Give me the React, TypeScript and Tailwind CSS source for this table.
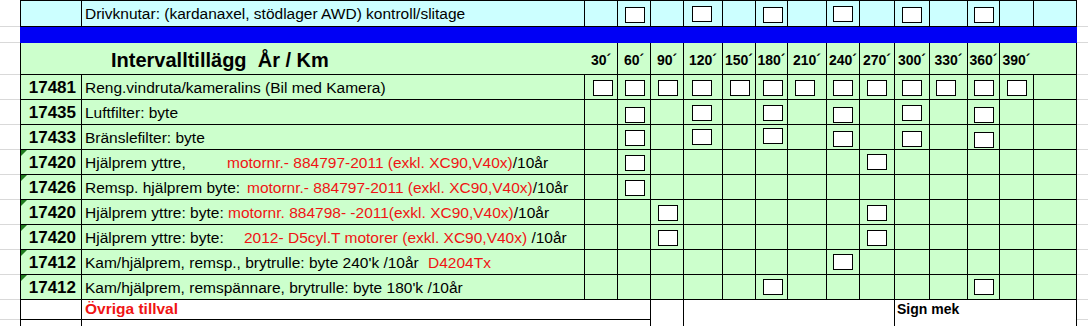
import React from "react";

const PERIODS = ["30´", "60´", "90´", "120´", "150´", "180´", "210´", "240´", "270´", "300´", "330´", "360´", "390´"];
const COL_W = ["w-[33px]", "w-[33px]", "w-[33px]", "w-[39px]", "w-[33px]", "w-[32px]", "w-[39px]", "w-[33px]", "w-[35px]", "w-[35px]", "w-[38px]", "w-[32px]", "w-[34px]"];
const BOX_PL = ["pl-[8px]", "pl-[7px]", "pl-[7px]", "pl-[8px]", "pl-[7px]", "pl-[7px]", "pl-[7px]", "pl-[6px]", "pl-[7px]", "pl-[7px]", "pl-[6px]", "pl-[6px]", "pl-[7px]"];
const MT: Record<number, string> = { 3: "mt-[3px]", 4: "mt-[4px]", 5: "mt-[5px]", 6: "mt-[6px]", 7: "mt-[7px]" };

type Boxes = Record<number, number>;

function Margins({ children, h }: { children: React.ReactNode; h: string }) {
  return (
    <div className={`flex ${h}`}>
      <div className="w-[20px] shrink-0 border-b border-[#d9d9d9]" />
      {children}
      <div className="flex-1 border-b border-[#d9d9d9]" />
    </div>
  );
}

function Box({ y }: { y: number }) {
  return <div className={`w-[20px] h-[16px] border border-black bg-white ${MT[y]}`} />;
}

function PeriodCells({ boxes }: { boxes: Boxes }) {
  return (
    <>
      {COL_W.map((w, i) => (
        <div key={i} className={`${w} shrink-0 border-r border-black ${BOX_PL[i]}`}>
          {boxes[i] !== undefined && <Box y={boxes[i]} />}
        </div>
      ))}
      <div className="w-[43px] shrink-0 border-r border-black" />
    </>
  );
}

function Red({ children }: { children: React.ReactNode }) {
  return <span className="text-[#f01414]">{children}</span>;
}

function Tri() {
  return (
    <div className="absolute left-0 top-0 w-0 h-0 border-t-[6px] border-r-[6px] border-t-[#1f7a1f] border-r-transparent" />
  );
}

type Row = { num: string; desc: React.ReactNode; boxes: Boxes; tri?: boolean };

const all: Boxes = { 0: 5, 1: 5, 2: 5, 3: 5, 4: 5, 5: 5, 6: 5, 7: 5, 8: 5, 9: 5, 10: 5, 11: 5, 12: 5 };

const ROWS: Row[] = [
  { num: "17481", desc: "Reng.vindruta/kameralins (Bil med Kamera)", boxes: all },
  { num: "17435", desc: "Luftfilter: byte", boxes: { 1: 7, 3: 5, 5: 5, 7: 7, 9: 5, 11: 7 } },
  { num: "17433", desc: "Bränslefilter: byte", boxes: { 1: 5, 3: 4, 5: 3, 7: 6, 9: 6, 11: 7 } },
  {
    num: "17420",
    tri: true,
    desc: (
      <>
        <span className="inline-block w-[142px]">Hjälprem yttre,</span>
        <Red>motornr.- 884797-2011 (exkl. XC90,V40x)</Red>/10år
      </>
    ),
    boxes: { 1: 5, 8: 4 },
  },
  {
    num: "17426",
    tri: true,
    desc: (
      <>
        <span className="inline-block w-[162px]">Remsp. hjälprem byte:</span>
        <Red>motornr.- 884797-2011 (exkl. XC90,V40x)</Red>/10år
      </>
    ),
    boxes: { 1: 5 },
  },
  {
    num: "17420",
    tri: true,
    desc: (
      <>
        <span className="inline-block w-[143px]">Hjälprem yttre: byte:</span>
        <Red>motornr. 884798- -2011(exkl. XC90,V40x)</Red>/10år
      </>
    ),
    boxes: { 2: 5, 8: 5 },
  },
  {
    num: "17420",
    tri: true,
    desc: (
      <>
        <span className="inline-block w-[159px]">Hjälprem yttre: byte:</span>
        <Red>2012- D5cyl.T motorer (exkl. XC90,V40x)</Red> /10år
      </>
    ),
    boxes: { 2: 5, 8: 5 },
  },
  {
    num: "17412",
    tri: true,
    desc: (
      <>
        <span className="inline-block w-[343px]">Kam/hjälprem, remsp., brytrulle: byte 240'k /10år</span>
        <Red>D4204Tx</Red>
      </>
    ),
    boxes: { 7: 4 },
  },
  {
    num: "17412",
    tri: true,
    desc: "Kam/hjälprem, remspännare, brytrulle: byte 180'k /10år",
    boxes: { 5: 4, 11: 4 },
  },
];

export default function App() {
  return (
    <div className="w-[1088px] h-[326px] overflow-hidden bg-white text-black font-['Liberation_Sans',Arial,sans-serif]">
      {/* top row */}
      <Margins h="h-[27px]">
        <div className="flex shrink-0 border-l border-t border-b border-black bg-[#ccffff]">
          <div className="w-[61px] shrink-0 border-r border-black" />
          <div className="w-[503px] shrink-0 border-r border-black pl-[3px] pt-[5px] text-[15.5px] leading-none whitespace-nowrap">
            Drivknutar: (kardanaxel, stödlager AWD) kontroll/slitage
          </div>
          <PeriodCells boxes={{ 1: 6, 3: 5, 5: 6, 7: 5, 9: 6, 11: 6 }} />
        </div>
      </Margins>

      {/* blue band */}
      <Margins h="h-[16px]">
        <div className="w-[1057px] shrink-0 bg-[#0000f5]" />
      </Margins>

      {/* header */}
      <Margins h="h-[32px]">
        <div className="flex shrink-0 border-l border-b border-black bg-[#ccffcc]">
          <div className="w-[564px] shrink-0 pl-[90px] pt-[7px] text-[20px] font-bold leading-none whitespace-pre">
            Intervalltillägg  År / Km
          </div>
          {PERIODS.map((p, i) => (
            <div
              key={p}
              className={`${COL_W[i]} shrink-0 border-r ${i === 12 ? "border-transparent" : "border-black"} pt-[10px] text-center text-[14px] font-bold leading-none whitespace-nowrap`}
            >
              {p}
            </div>
          ))}
          <div className="w-[43px] shrink-0 border-r border-black" />
        </div>
      </Margins>

      {/* data rows */}
      {ROWS.map((r, idx) => (
        <Margins key={idx} h="h-[25px]">
          <div className="flex shrink-0 border-l border-b border-black bg-[#ccffcc]">
            <div className="relative w-[61px] shrink-0 border-r border-black pr-[5px] pt-[4px] text-right text-[17px] font-bold leading-none">
              {r.tri && <Tri />}
              {r.num}
            </div>
            <div className="w-[503px] shrink-0 border-r border-black pl-[3px] pt-[5px] text-[15.5px] leading-none whitespace-pre">
              {r.desc}
            </div>
            <PeriodCells boxes={r.boxes} />
          </div>
        </Margins>
      ))}

      {/* Övriga tillval row */}
      <Margins h="h-[20px]">
        <div className="flex shrink-0 border-l border-black bg-white">
          <div className="w-[61px] shrink-0 border-r border-b border-black" />
          <div className="w-[569px] shrink-0 border-r border-b border-black pl-[3px] pt-[1px] text-[15.5px] font-bold leading-none text-[#f01414]">
            Övriga tillval
          </div>
          <div className="w-[33px] shrink-0 border-r border-black" />
          <div className="w-[211px] shrink-0 border-r border-black" />
          <div className="w-[182px] shrink-0 border-r border-black pl-[2px] pt-[2px] text-[14px] font-bold leading-none">
            Sign mek
          </div>
        </div>
      </Margins>

      {/* last partial row */}
      <div className="flex h-[7px]">
        <div className="w-[20px] shrink-0" />
        <div className="flex shrink-0 border-l border-black bg-white">
          <div className="w-[61px] shrink-0 border-r border-black" />
          <div className="w-[569px] shrink-0 border-r border-black" />
          <div className="w-[33px] shrink-0 border-r border-black" />
          <div className="w-[211px] shrink-0 border-r border-black" />
          <div className="w-[182px] shrink-0 border-r border-black" />
        </div>
        <div className="flex-1" />
      </div>
    </div>
  );
}
